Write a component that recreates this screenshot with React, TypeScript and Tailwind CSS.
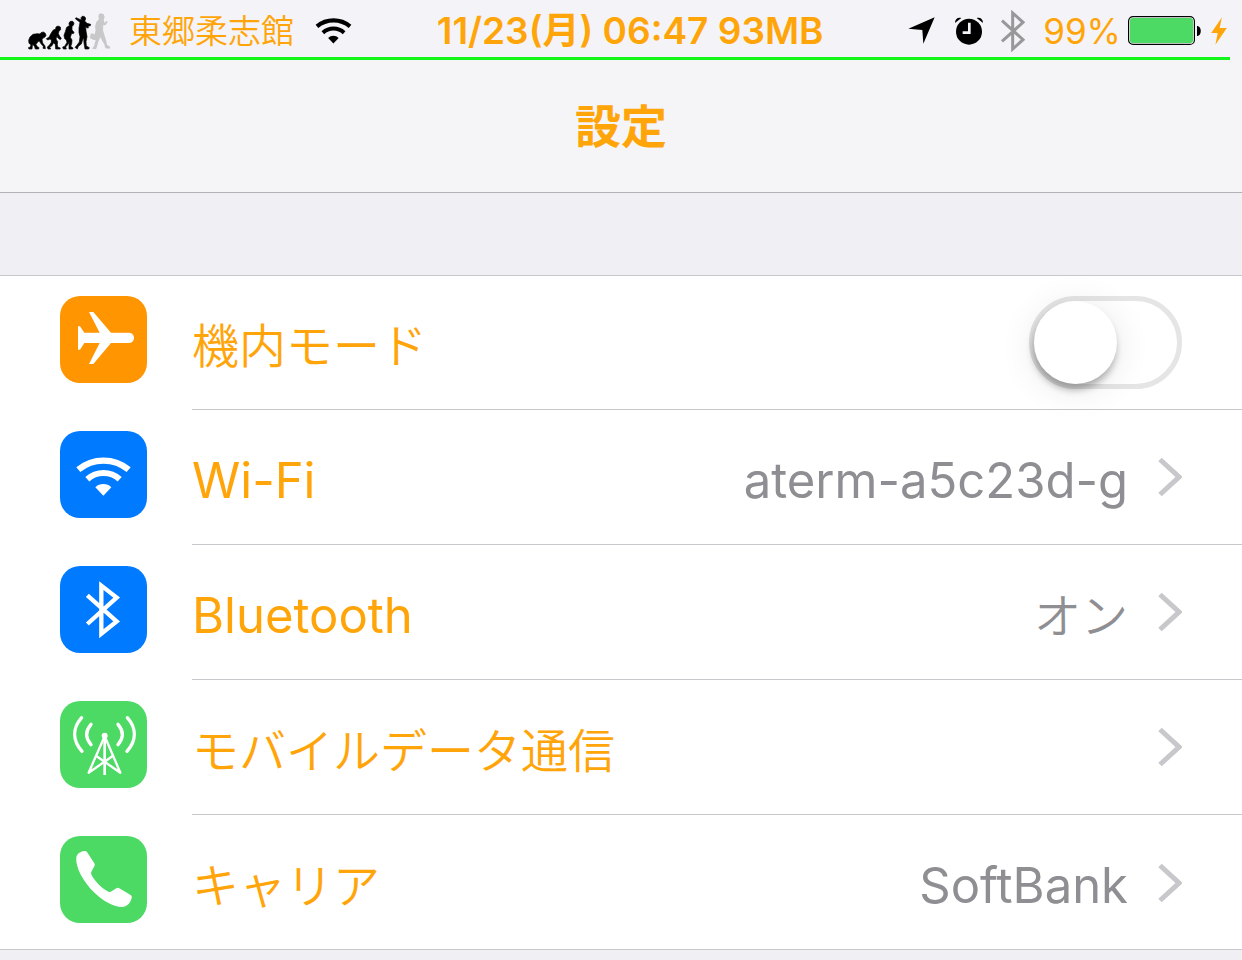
import type { ReactNode } from 'react';

const BATTERY = 99;

function EvolutionIcon() {
  return (
    <svg className="w-[84px] h-[38px]" viewBox="24 14 252 114" aria-hidden="true">
      <g stroke="black" strokeWidth="2" strokeLinejoin="round">
        <path d="M27 125 L25 121 L31 119 L33 112 L27 108 L26 99 L30 89 L39 81 L52 79 L60 80 L63 76 L70 74 L76 78 L78 85 L74 90 L69 92 L66 97 L68 107 L75 116 L76 124 L69 123 L70 117 L62 108 L58 101 L53 103 L51 108 L47 110 L52 118 L57 121 L56 125 L46 125 L44 118 L38 110 L37 117 L36 125Z" />
        <path d="M84 125 L82 119 L88 114 L94 105 L94 98 L90 95 L83 98 L79 94 L87 90 L92 80 L99 69 L107 65 L108 59 L114 56 L121 59 L122 67 L117 71 L115 79 L119 87 L124 93 L121 97 L114 92 L111 87 L108 95 L113 103 L112 111 L113 119 L121 122 L120 125 L107 125 L106 112 L101 106 L96 115 L89 119 L92 125Z" />
        <path d="M130 125 L128 119 L134 117 L141 105 L139 98 L134 94 L132 84 L136 73 L140 60 L148 55 L147 47 L151 42 L158 42 L162 47 L160 54 L156 57 L156 68 L162 75 L160 79 L155 78 L151 90 L156 98 L155 109 L152 117 L159 122 L158 125 L147 125 L147 111 L148 104 L143 112 L137 119 L139 125Z" />
        <path d="M166 34 L168 31 L184 38 L183 31 L188 26 L195 29 L197 35 L194 41 L201 48 L212 51 L211 55 L204 57 L205 62 L200 61 L197 56 L198 71 L201 88 L198 103 L199 116 L208 121 L206 125 L195 125 L192 108 L191 91 L188 97 L184 110 L175 117 L172 125 L165 120 L169 116 L178 104 L180 88 L177 76 L177 62 L180 45Z" />
      </g>
      <path
        fill="#c8c8ca"
        d="M237 35 L235 27 L237 20 L244 18 L251 21 L254 30 L251 37 L254 47 L260 40 L263 44 L256 54 L250 53 L249 69 L253 82 L258 98 L261 112 L271 119 L269 124 L256 123 L253 111 L245 97 L241 90 L235 103 L231 118 L228 126 L216 124 L222 116 L227 98 L221 98 L209 92 L213 78 L224 81 L227 69 L225 58 L229 44Z"
      />
    </svg>
  );
}

function WifiShape() {
  return (
    <>
      <path d="M85 149 A118 118 0 0 1 236 149" fill="none" stroke="currentColor" strokeWidth="19" />
      <path d="M112 178 A72 72 0 0 1 209 178" fill="none" stroke="currentColor" strokeWidth="18" />
      <path d="M136 202 A34 34 0 0 1 184 202 L160 227Z" fill="currentColor" />
    </>
  );
}

function LocationIcon() {
  return (
    <svg className="w-[27px] h-[27px]" viewBox="88 53 81 81" aria-hidden="true">
      <path d="M168 54 L134 133 L131 92 L89 88Z" />
    </svg>
  );
}

function AlarmIcon() {
  return (
    <svg className="w-7 h-7" viewBox="228 49 84 84" aria-hidden="true">
      <circle cx="270" cy="93" r="39" />
      <path d="M228 67 C228 55 236 49 247 52Z M312 67 C312 55 304 49 293 52Z" />
      <path d="M271 66 V96 H251" fill="none" stroke="#f4f4f8" strokeWidth="8" />
    </svg>
  );
}

function BluetoothStatusIcon() {
  return (
    <svg className="w-6 h-[42px]" viewBox="365 28 72 126" aria-hidden="true">
      <path
        d="M368 60 L431 117 L400 145 V37 L431 65 L368 122"
        fill="none"
        stroke="#98989b"
        strokeWidth="9"
      />
    </svg>
  );
}

function BatteryIcon() {
  return (
    <svg className="w-[73px] h-[29px]" viewBox="0 0 73 29" aria-hidden="true">
      <rect x="0.6" y="0.6" width="65.8" height="27.8" rx="4.5" fill="white" stroke="black" strokeWidth="1.2" />
      <rect x="2" y="2" width="63" height="25" rx="2.5" fill="#4cd964" />
      <path d="M69 10 C74 10 74 20 69 20Z" />
    </svg>
  );
}

function BoltIcon() {
  return (
    <svg className="w-4 h-7" viewBox="993 47 48 86" aria-hidden="true">
      <path d="M1026 48 L993 96 H1013 L1006 132 L1041 81 H1019Z" fill="#ffa50a" />
    </svg>
  );
}

function Tile(props: { className: string; viewBox?: string; children: ReactNode }) {
  return (
    <span className={`block size-[87px] shrink-0 rounded-[20px] text-white ${props.className}`}>
      <svg className="size-full" viewBox={props.viewBox ?? '30 33 261 261'} fill="currentColor" aria-hidden="true">
        {props.children}
      </svg>
    </span>
  );
}

function Chevron() {
  return (
    <svg className="w-6 h-10 ml-[30px]" viewBox="0 0 24 40" fill="none" aria-hidden="true">
      <path d="M2 2.5 L21 20 L2 37.5" stroke="#c7c7cc" strokeWidth="5" />
    </svg>
  );
}

// kana and kanji are set a little smaller and lighter than latin text
const JA = 'text-[47px] font-[350]';
const LATIN = 'text-[49px]';

function LinkRow(props: { icon: ReactNode; label: string; value?: string; ja?: boolean; jaValue?: boolean; last?: boolean }) {
  return (
    <li>
      <a href="#" className="flex h-[135px] pl-[60px]">
        <span className="pt-[21px]">{props.icon}</span>
        <span
          className={`ml-[45px] flex flex-1 items-center pr-[60px] ${props.last ? '' : 'border-b border-[#c8c7cc]'}`}
        >
          <span className={`flex-1 pt-1.5 ${props.ja ? JA : LATIN}`}>{props.label}</span>
          <span className={`pt-1.5 text-[#8e8e93] ${props.jaValue ? JA : LATIN}`}>{props.value}</span>
          <Chevron />
        </span>
      </a>
    </li>
  );
}

function StatusBar() {
  return (
    <div className="bg-[#f4f4f8]">
      <div className="flex h-[57px] items-center justify-between pl-7 pr-[15px] pt-1 leading-none text-[#ffa50a]">
        <div className="flex items-center">
          <EvolutionIcon />
          <span className="ml-[17px] pt-0.5 text-[33px] font-[350]">東郷柔志館</span>
          <svg className="ml-[21px] h-[27px] w-[37px] text-black" viewBox="76 108 169 120" aria-label="Wi-Fi">
            <WifiShape />
          </svg>
        </div>
        <time className="text-[37px] font-semibold">11/23(月) 06:47 93MB</time>
        <div className="flex items-center">
          <LocationIcon />
          <span className="ml-5"><AlarmIcon /></span>
          <span className="ml-[18px]"><BluetoothStatusIcon /></span>
          <span className="ml-[18px] mr-[7px] pt-0.5 text-[35px]">{BATTERY}%</span>
          <BatteryIcon />
          <span className="ml-[10px]"><BoltIcon /></span>
        </div>
      </div>
      <div className="h-[3px] bg-[#12f61a]" style={{ width: `${BATTERY}%` }} />
    </div>
  );
}

export default function App() {
  return (
    <div lang="ja" className="min-h-screen bg-[#efeff4] font-['Inter','Noto_Sans_CJK_JP',sans-serif]">
      <StatusBar />
      <header className="flex h-[133px] items-center justify-center border-b border-[#b2b2b6] bg-[#f5f5f8]">
        <h1 className="text-[46px] font-bold leading-none text-[#ffa50a]">設定</h1>
      </header>
      <ul className="mt-[82px] bg-white leading-none text-[#ffa50a] shadow-[inset_0_1px_0_#c8c7cc,inset_0_-1px_0_#c8c7cc]">
        <li className="flex h-[135px] pl-[60px]">
          <span className="pt-[21px]">
            <Tile className="bg-[#ff9500]" viewBox="30 30 261 261">
              <path d="M84 121 H90 L103 140 H149 L117 78 H130 L183 140 H238 C257 142 257 169 238 171 H183 L130 234 H117 L149 171 H103 L90 191 H84Z" />
            </Tile>
          </span>
          <div className="ml-[45px] flex flex-1 items-center border-b border-[#c8c7cc] pr-[60px]">
            <label htmlFor="airplane" className={`flex-1 pt-1.5 ${JA}`}>機内モード</label>
            <input
              id="airplane"
              type="checkbox"
              role="switch"
              className="h-[93px] w-[153px] appearance-none rounded-full border-[5px] border-[#e5e5e5] bg-white before:block before:size-[83px] before:rounded-full before:bg-white before:shadow-[-1px_6px_7px_rgba(0,0,0,0.28),0_5px_36px_rgba(0,0,0,0.1)] checked:bg-[#4cd964] checked:before:ml-[60px]"
            />
          </div>
        </li>
        <LinkRow
          icon={<Tile className="bg-[#007aff]"><WifiShape /></Tile>}
          label="Wi-Fi"
          value="aterm-a5c23d-g"
        />
        <LinkRow
          icon={
            <Tile className="bg-[#007aff]">
              <path
                d="M112 121 L200 199 L154 236 V92 L200 128 L112 207"
                fill="none"
                stroke="currentColor"
                strokeWidth="13"
              />
            </Tile>
          }
          label="Bluetooth"
          value="オン"
          jaValue
        />
        <LinkRow
          icon={
            <Tile className="bg-[#4cd964]">
              <circle cx="164" cy="137" r="9" />
              <g fill="none" stroke="currentColor" strokeLinecap="round">
                <path strokeWidth="10" d="M95 83 C67 115 67 151 96 184 M123 103 C106 123 106 144 123 164 M232 83 C260 115 260 151 231 184 M204 103 C221 123 221 144 204 164" />
                <path strokeWidth="7" d="M162 143 L116 248 M166 143 L211 248 M140 199 L211 248 M187 199 L116 248" />
                <path strokeWidth="8" strokeLinecap="butt" d="M164 137 V255" />
              </g>
            </Tile>
          }
          label="モバイルデータ通信"
          ja
        />
        <LinkRow
          last
          icon={
            <Tile className="bg-[#4cd964]">
              <path d="M79 96 C81 87 90 80 103 78 Q108 77 111 81 L133 115 Q136 119 133 124 L124 140 Q122 145 125 151 C138 173 156 191 175 200 Q180 202 185 199 L199 190 Q203 187 208 190 L243 211 Q247 214 245 219 C241 234 232 245 216 246 C192 246 160 230 132 202 C102 172 75 128 79 96Z" />
            </Tile>
          }
          label="キャリア"
          ja
          value="SoftBank"
        />
      </ul>
    </div>
  );
}
